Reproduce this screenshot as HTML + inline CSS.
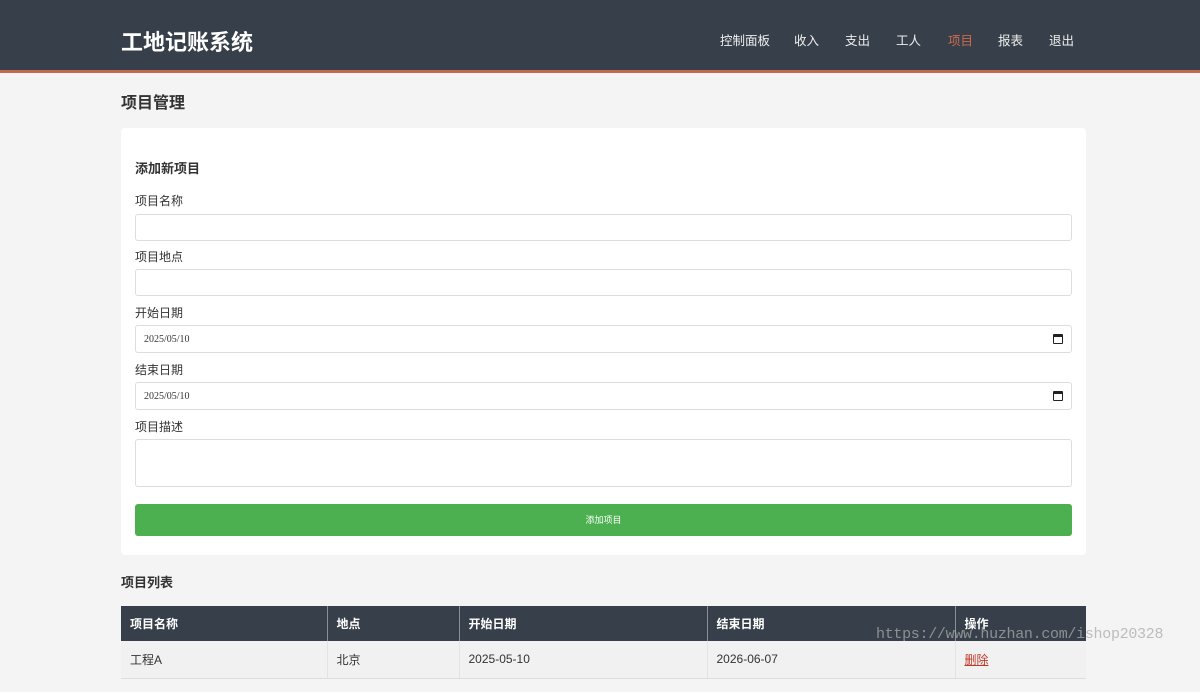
<!DOCTYPE html>
<html><head><meta charset="utf-8"><style>
*{box-sizing:border-box;margin:0;padding:0}
body{width:1200px;height:692px;overflow:hidden;background:#f4f4f4;font-family:"Liberation Sans","Noto Sans CJK SC",sans-serif;color:#333;position:relative}
.hd{position:absolute;left:0;top:0;width:1200px;height:73px;background:#37404a;border-bottom:3px solid #c0694f}
.logo{position:absolute;left:121px;top:25px;font-size:22px;font-weight:bold;color:#fff}
.nav a{position:absolute;top:30px;font-size:12.5px;color:#eee;text-decoration:none}
.abs{position:absolute}
h2{position:absolute;left:121px;top:89px;font-size:16px;font-weight:bold}
.card{position:absolute;left:121px;top:128px;width:965px;height:427px;background:#fff;border-radius:4px}
.lbl{position:absolute;left:135px;font-size:12px;color:#333}
.inp{position:absolute;left:135px;width:937px;border:1px solid #ddd;border-radius:3px;background:#fff;font-size:10px;padding-left:8px;font-family:"Liberation Serif",serif;display:flex;align-items:center}
.cal{position:absolute;right:8px;top:50%;margin-top:-5px;width:10px;height:10px;border:1.5px solid #222;border-top-width:3px;border-radius:1px}
.btn{position:absolute;left:135px;top:504px;width:937px;height:32px;background:#4caf50;border-radius:3px;color:#fff;font-size:9px;text-align:center;line-height:32px}
table{position:absolute;left:121px;top:606px;width:965px;border-collapse:collapse;font-size:12px}
th{background:#37404a;color:#fff;text-align:left;height:35px;padding-left:9px;border-right:1px solid #8a9097}
td{background:#f1f1f1;height:37px;padding-left:9px;border-right:1px solid #e3e3e3;border-bottom:1px solid #ddd}
</style></head><body>
<div class="hd"><div class="logo">工地记账系统</div>
<div class="nav"><a style="left:720px">控制面板</a><a style="left:794px">收入</a><a style="left:845px">支出</a><a style="left:896px">工人</a><a style="left:948px;color:#d0694c">项目</a><a style="left:998px">报表</a><a style="left:1049px">退出</a></div></div>
<h2>项目管理</h2>
<div class="card"></div>
<div class="abs" style="left:135px;top:158px;font-size:13px;font-weight:bold">添加新项目</div>
<div class="lbl" style="top:192px">项目名称</div>
<div class="inp" style="top:214px;height:27px"></div>
<div class="lbl" style="top:248px">项目地点</div>
<div class="inp" style="top:269px;height:27px"></div>
<div class="lbl" style="top:304px">开始日期</div>
<div class="inp" style="top:325px;height:28px">2025/05/10<span class="cal"></span></div>
<div class="lbl" style="top:361px">结束日期</div>
<div class="inp" style="top:382px;height:28px">2025/05/10<span class="cal"></span></div>
<div class="lbl" style="top:418px">项目描述</div>
<div class="inp" style="top:439px;height:48px"></div>
<div class="btn">添加项目</div>
<div class="abs" style="left:121px;top:572px;font-size:13px;font-weight:bold">项目列表</div>
<table><tr><th style="width:206px">项目名称</th><th style="width:132px">地点</th><th style="width:248px">开始日期</th><th style="width:248px">结束日期</th><th style="border-right:0">操作</th></tr>
<tr><td>工程A</td><td>北京</td><td>2025-05-10</td><td>2026-06-07</td><td style="border-right:0"><span style="color:#c0392b;text-decoration:underline">删除</span></td></tr></table>
<div class="abs" style="left:876px;top:626px;font-size:15px;letter-spacing:-0.3px;color:#aaa;font-family:'Liberation Mono',monospace;opacity:.75">https://www.huzhan.com/ishop20328</div>
</body></html>
